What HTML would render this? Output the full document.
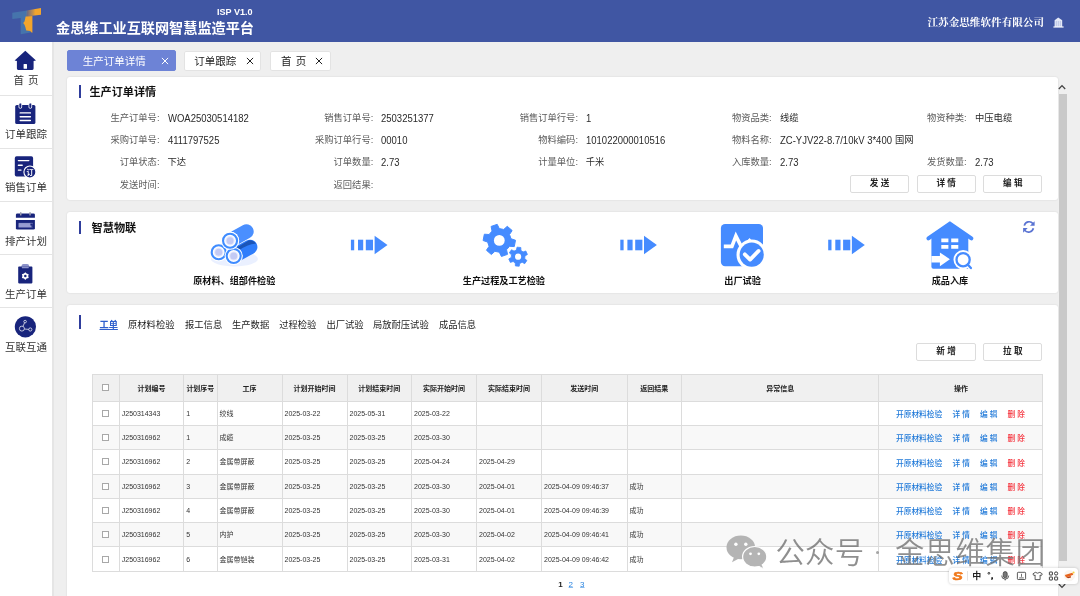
<!DOCTYPE html>
<html lang="zh-CN">
<head>
<meta charset="utf-8">
<title>金思维工业互联网智慧监造平台</title>
<style>
*{box-sizing:border-box;margin:0;padding:0}
html,body{width:1080px;height:596px;overflow:hidden;background:#efefef}
body{position:relative;font-family:"Liberation Sans","Noto Sans CJK SC",sans-serif;color:#222;font-size:9.3px}
.a{position:absolute}
.t{position:absolute;white-space:nowrap;line-height:1}
#hdr{left:0;top:0;width:1080px;height:41.8px;background:#4056a3}
#side{left:0;top:42px;width:54px;height:554px;background:#fff;border-right:2px solid #e5e5e5}
.sdiv{position:absolute;left:0;width:52px;height:1px;background:#e4e4e4}
.slab{position:absolute;left:0;width:52px;text-align:center;font-size:10.5px;line-height:12px;color:#333;white-space:nowrap}
.card{position:absolute;background:#fff;border-radius:3px;box-shadow:0 0 2px rgba(0,0,0,.12)}
.bar{position:absolute;width:2.2px;background:#2f3d9c}
.lab{position:absolute;white-space:nowrap;line-height:12px;font-size:9.3px;color:#5c5c5c;text-align:right}
.val{position:absolute;white-space:nowrap;line-height:12px;font-size:10.5px;color:#2a2a2a;transform:scaleX(.905);transform-origin:0 50%}
.val.cj{font-size:9.3px;transform:none}
.btn{position:absolute;height:17.5px;border:1px solid #dcdcdc;border-radius:2px;background:#fff;font-size:8.6px;font-weight:bold;line-height:15.5px;text-align:center;color:#222;white-space:nowrap}
.tab{position:absolute;top:50px;height:21px;border-radius:2px;background:#fff;border:1px solid #e3e3e3;font-size:10.5px;line-height:19px;color:#222;white-space:nowrap}
</style>
</head>
<body>
<div id="root" style="position:absolute;left:0;top:0;width:1080px;height:596px;will-change:transform">
<!-- HEADER -->
<div id="hdr" class="a">
  <svg class="a" style="left:0;top:0" width="52" height="42" viewBox="0 0 52 42">
    <defs><linearGradient id="lg1" x1="0" x2="1" y1="0" y2="0"><stop offset="0" stop-color="#f3a52c" stop-opacity="0.15"/><stop offset="0.5" stop-color="#f3a52c" stop-opacity="0.8"/><stop offset="0.62" stop-color="#f3a52c" stop-opacity="1"/></linearGradient></defs>
    <path d="M12.3 12.8 L27.2 10.4 L26.4 17.2 L26 30 L30.4 31 L30.6 32.6 L20.7 34.2 L20.7 17.9 L12.3 18.9 Z" fill="#4674ac"/>
    <path d="M26.6 10.5 L41 8 L41 14.8 L26 16.4 Z" fill="url(#lg1)"/>
    <path d="M25.6 16.5 L32.4 15.9 L32.4 32.7 L31.2 32.2 L30.2 30.9 L26.2 30.5 L25.4 27.2 L24.5 24.8 L23.2 23 L24.5 21.4 L25.1 19 Z" fill="#f3a52c"/>
  </svg>
  <div class="t" style="left:217px;top:7.8px;font-size:9.05px;font-weight:bold;color:#fff">ISP V1.0</div>
  <div class="t" style="left:56px;top:21.2px;font-size:14.15px;font-weight:bold;color:#fff">金思维工业互联网智慧监造平台</div>
  <div class="t" style="left:927.5px;top:17.6px;font-size:10.6px;font-weight:bold;color:#fff;font-family:'Liberation Serif','Noto Serif CJK SC',serif">江苏金思维软件有限公司</div>
  <svg class="a" style="left:1053px;top:16.5px" width="11" height="11" viewBox="0 0 11 11">
    <path d="M1.6 10 V3.2 L5.2 0.6 L9.2 3.2 V10 Z" fill="#e4e9f7"/>
    <path d="M3.3 4 V9.4 M5.3 4 V9.4 M7.3 4 V9.4" stroke="#a9b6dd" stroke-width="0.7"/>
    <rect x="0.4" y="9.4" width="10.2" height="1.2" fill="#f4f6fc"/>
  </svg>
</div>

<!-- SIDEBAR -->
<div id="side" class="a"></div>
<div id="sideitems" class="a" style="left:0;top:0;width:52px;height:596px">
  <div class="sdiv" style="top:95px"></div>
  <div class="sdiv" style="top:148px"></div>
  <div class="sdiv" style="top:201px"></div>
  <div class="sdiv" style="top:254px"></div>
  <div class="sdiv" style="top:307px"></div>
  <div class="slab" style="top:74px;word-spacing:1px">首 页</div>
  <div class="slab" style="top:128px">订单跟踪</div>
  <div class="slab" style="top:181px">销售订单</div>
  <div class="slab" style="top:235px">排产计划</div>
  <div class="slab" style="top:288px">生产订单</div>
  <div class="slab" style="top:341px">互联互通</div>
  <svg class="a" style="left:0;top:0" width="52" height="596" viewBox="0 0 52 596">
<!-- home -->
<path d="M25.3 50.8 L36 60.6 L33.6 60.9 L33.6 68.6 Q33.6 69.9 32.3 69.9 L18.2 69.9 Q16.9 69.9 16.9 68.6 L16.9 60.9 L14.6 60.6 Z" fill="#18247c"/>
<rect x="23.6" y="64" width="3.4" height="4.8" rx="0.5" fill="#fff"/>
<!-- order tracking -->
<rect x="15.2" y="105" width="20.2" height="19" rx="1.6" fill="#18247c"/>
<rect x="18.9" y="103" width="2.8" height="5.4" rx="1.4" fill="#18247c" stroke="#fff" stroke-width="0.8"/>
<rect x="28.9" y="103" width="2.8" height="5.4" rx="1.4" fill="#18247c" stroke="#fff" stroke-width="0.8"/>
<path d="M20.2 112.9 H30.4 M20.2 116.7 H30.4 M20.2 120.5 H30.4" stroke="#fff" stroke-width="1.4" stroke-linecap="round"/>
<!-- sales order -->
<rect x="14.8" y="156.3" width="18.3" height="20.2" rx="1.8" fill="#18247c"/>
<path d="M18.4 160.6 H28.8 M18.4 165.3 H22.2 M18.4 170.1 H21" stroke="#fff" stroke-width="1.4" stroke-linecap="round"/>
<circle cx="29.9" cy="172" r="6" fill="#18247c" stroke="#fff" stroke-width="1.1"/>
<text x="29.9" y="174.6" font-size="7" font-weight="bold" fill="#fff" text-anchor="middle" font-family="'Liberation Sans','Noto Sans CJK SC',sans-serif">订</text>
<!-- schedule -->
<path d="M15.9 214.8 Q15.9 213.4 17.3 213.4 H33.5 Q34.9 213.4 34.9 214.8 V217.8 H15.9 Z" fill="#18247c"/>
<path d="M15.9 219.9 H34.9 V228.2 Q34.9 229.6 33.5 229.6 H17.3 Q15.9 229.6 15.9 228.2 Z" fill="#18247c"/>
<rect x="20" y="212" width="1.5" height="3.6" rx="0.7" fill="#9a9cb0"/>
<rect x="29.3" y="212" width="1.5" height="3.6" rx="0.7" fill="#9a9cb0"/>
<rect x="18.6" y="222.9" width="14.2" height="4.6" fill="#8b91c9"/>
<path d="M18.6 224.2 H31 M18.6 225.4 H31 M18.6 226.6 H31" stroke="#a9aede" stroke-width="0.5"/>
<path d="M30.4 223.6 h2.4 v3.9 h-1.2 v-2 h-1.2 z" fill="#18247c"/>
<!-- production order -->
<rect x="21.5" y="264.1" width="7.6" height="4.4" rx="2" fill="#8b91c9"/>
<rect x="18.2" y="266.6" width="14.2" height="16.8" rx="0.8" fill="#18247c"/>
<path d="M21.8 266.6 H28.8 V267.4 Q28.8 268.3 27.9 268.3 H22.7 Q21.8 268.3 21.8 267.4 Z" fill="#8b91c9"/>
<g transform="translate(25.3 276.1)">
<path d="M0 -3.9 L1.3 -2.5 L3.4 -1.95 L2.9 0 L3.4 1.95 L1.3 2.5 L0 3.9 L-1.3 2.5 L-3.4 1.95 L-2.9 0 L-3.4 -1.95 L-1.3 -2.5 Z" fill="#fff"/>
<circle r="1.25" fill="#18247c"/>
</g>
<!-- interconnect -->
<circle cx="25.4" cy="326.8" r="10.6" fill="#18247c"/>
<g fill="none" stroke="#fff" stroke-width="0.7">
<circle cx="21.9" cy="328.6" r="2.5"/>
<circle cx="25.1" cy="321.6" r="1.3"/>
<circle cx="30.3" cy="329.5" r="1.6"/>
<path d="M23 326.3 L24.5 322.9 M24.4 329 L28.7 329.4"/>
</g>
</svg>
</div>

<!-- PAGE TABS -->
<div class="tab" style="left:66.5px;width:109px;background:#6d83d6;border-color:#6d83d6;color:#fff"><span class="t" style="left:15.3px;top:4.7px">生产订单详情</span><svg class="a" style="left:93.2px;top:5.8px" width="8" height="8" viewBox="0 0 8 8"><path d="M0.9 0.9 L7.1 7.1 M7.1 0.9 L0.9 7.1" stroke="#fff" stroke-width="1" fill="none"/></svg></div>
<div class="tab" style="left:183.7px;width:77.3px;top:51px;height:20px"><span class="t" style="left:9.6px;top:3.7px">订单跟踪</span><svg class="a" style="left:61.3px;top:4.8px" width="8" height="8" viewBox="0 0 8 8"><path d="M0.9 0.9 L7.1 7.1 M7.1 0.9 L0.9 7.1" stroke="#222" stroke-width="1" fill="none"/></svg></div>
<div class="tab" style="left:269.5px;width:61px;top:51px;height:20px"><span class="t" style="left:10.4px;top:3.7px;word-spacing:1.4px">首 页</span><svg class="a" style="left:44.8px;top:4.8px" width="8" height="8" viewBox="0 0 8 8"><path d="M0.9 0.9 L7.1 7.1 M7.1 0.9 L0.9 7.1" stroke="#222" stroke-width="1" fill="none"/></svg></div>

<!-- CARD 1 -->
<div class="card" style="left:66.7px;top:76.7px;width:991px;height:123.3px"></div>
<div class="bar" style="left:79.2px;top:85px;height:13px"></div>
<div class="t" style="left:89.5px;top:87.2px;font-size:11.1px;font-weight:bold;color:#111">生产订单详情</div>
<div class="lab" style="left:59.5px;width:100px;top:112px">生产订单号:</div>
<div class="val" style="left:167.5px;top:112px">WOA25030514182</div>
<div class="lab" style="left:273.3px;width:100px;top:112px">销售订单号:</div>
<div class="val" style="left:381.3px;top:112px">2503251377</div>
<div class="lab" style="left:478.0px;width:100px;top:112px">销售订单行号:</div>
<div class="val" style="left:585.8px;top:112px">1</div>
<div class="lab" style="left:671.7px;width:100px;top:112px">物资品类:</div>
<div class="val cj" style="left:780.0px;top:112px">线缆</div>
<div class="lab" style="left:866.7px;width:100px;top:112px">物资种类:</div>
<div class="val cj" style="left:975.0px;top:112px">中压电缆</div>
<div class="lab" style="left:59.5px;width:100px;top:134.4px">采购订单号:</div>
<div class="val" style="left:167.5px;top:134.4px">4111797525</div>
<div class="lab" style="left:273.3px;width:100px;top:134.4px">采购订单行号:</div>
<div class="val" style="left:381.3px;top:134.4px">00010</div>
<div class="lab" style="left:478.0px;width:100px;top:134.4px">物料编码:</div>
<div class="val" style="left:585.8px;top:134.4px">101022000010516</div>
<div class="lab" style="left:671.7px;width:100px;top:134.4px">物料名称:</div>
<div class="val" style="left:780.0px;top:134.4px">ZC-YJV22-8.7/10kV 3*400</div><div class="val cj" style="left:895px;top:134.4px">国网</div>
<div class="lab" style="left:59.5px;width:100px;top:156px">订单状态:</div>
<div class="val cj" style="left:167.5px;top:156px">下达</div>
<div class="lab" style="left:273.3px;width:100px;top:156px">订单数量:</div>
<div class="val" style="left:381.3px;top:156px">2.73</div>
<div class="lab" style="left:478.0px;width:100px;top:156px">计量单位:</div>
<div class="val cj" style="left:585.8px;top:156px">千米</div>
<div class="lab" style="left:671.7px;width:100px;top:156px">入库数量:</div>
<div class="val" style="left:780.0px;top:156px">2.73</div>
<div class="lab" style="left:866.7px;width:100px;top:156px">发货数量:</div>
<div class="val" style="left:975.0px;top:156px">2.73</div>
<div class="lab" style="left:59.5px;width:100px;top:179px">发送时间:</div>
<div class="lab" style="left:273.3px;width:100px;top:179px">返回结果:</div>
<div class="btn" style="left:850px;top:175px;width:59px">发 送</div>
<div class="btn" style="left:916.7px;top:175px;width:59px">详 情</div>
<div class="btn" style="left:983.3px;top:175px;width:59px">编 辑</div>

<!-- CARD 2 -->
<div class="card" style="left:66.7px;top:211.6px;width:991px;height:81.4px"></div>
<div class="bar" style="left:79.2px;top:220.6px;height:13px"></div>
<div class="t" style="left:91.5px;top:223.4px;font-size:11.2px;font-weight:bold;color:#111">智慧物联</div>
<svg class="a" style="left:0;top:0" width="1080" height="596" viewBox="0 0 1080 596"><g transform="translate(-0.2 0.6)"><ellipse cx="234.6" cy="258.3" rx="23.5" ry="7.5" fill="#eaf0ff"/><line x1="230.25" y1="240.1" x2="246.6" y2="230.9" stroke="#4a8fff" stroke-width="14.6" stroke-linecap="round"/><circle cx="230.25" cy="240.1" r="9.1" fill="#fff"/><circle cx="230.25" cy="240.1" r="7" fill="#fdfdff" stroke="#3f8cff" stroke-width="2.1"/><circle cx="230.25" cy="240.1" r="4.6" fill="#e6e9fb"/><circle cx="230.25" cy="240.1" r="3.5" fill="#c3caf4"/><line x1="233.9" y1="255.4" x2="250.3" y2="246.4" stroke="#2f7dfb" stroke-width="14.6" stroke-linecap="round"/><path d="M237 247 L249.3 239.6 Q254 239.2 256.2 243.2 Q250 242.4 239 249.8 Z" fill="#1b55b8"/><circle cx="218.9" cy="251.7" r="9.1" fill="#fff"/><circle cx="218.9" cy="251.7" r="7" fill="#fdfdff" stroke="#3f8cff" stroke-width="2.1"/><circle cx="218.9" cy="251.7" r="4.6" fill="#e6e9fb"/><circle cx="218.9" cy="251.7" r="3.5" fill="#c3caf4"/><circle cx="233.9" cy="255.4" r="9.1" fill="#fff"/><circle cx="233.9" cy="255.4" r="7" fill="#fdfdff" stroke="#3f8cff" stroke-width="2.1"/><circle cx="233.9" cy="255.4" r="4.6" fill="#e6e9fb"/><circle cx="233.9" cy="255.4" r="3.5" fill="#c3caf4"/><circle cx="230.25" cy="240.1" r="9.1" fill="#fff"/><circle cx="230.25" cy="240.1" r="7" fill="#fdfdff" stroke="#3f8cff" stroke-width="2.1"/><circle cx="230.25" cy="240.1" r="4.6" fill="#e6e9fb"/><circle cx="230.25" cy="240.1" r="3.5" fill="#c3caf4"/></g><rect x="350.9" y="239.7" width="3.3" height="10.6" fill="#458bff"/><rect x="358.0" y="239.7" width="5.2" height="10.6" fill="#458bff"/><rect x="365.79999999999995" y="239.7" width="7.2" height="10.6" fill="#458bff"/><path d="M374.59999999999997 235.7 L387.5 245 L374.59999999999997 254.3 Z" fill="#458bff"/><rect x="620.3" y="239.7" width="3.3" height="10.6" fill="#458bff"/><rect x="627.4" y="239.7" width="5.2" height="10.6" fill="#458bff"/><rect x="635.1999999999999" y="239.7" width="7.2" height="10.6" fill="#458bff"/><path d="M644.0 235.7 L656.9 245 L644.0 254.3 Z" fill="#458bff"/><rect x="828.2" y="239.7" width="3.3" height="10.6" fill="#458bff"/><rect x="835.3" y="239.7" width="5.2" height="10.6" fill="#458bff"/><rect x="843.1" y="239.7" width="7.2" height="10.6" fill="#458bff"/><path d="M851.9 235.7 L864.8 245 L851.9 254.3 Z" fill="#458bff"/><path d="M492.04 231.10 L491.08 226.44 L497.19 224.34 L499.30 228.60 L503.72 229.46 L507.28 226.30 L512.15 230.54 L509.52 234.50 L510.99 238.76 L515.50 240.26 L514.27 246.60 L509.52 246.30 L506.56 249.70 L507.52 254.36 L501.41 256.46 L499.30 252.20 L494.88 251.34 L491.32 254.50 L486.45 250.26 L489.08 246.30 L487.61 242.04 L483.10 240.54 L484.33 234.20 L489.08 234.50 Z" fill="#458bff" stroke="#458bff" stroke-width="1" stroke-linejoin="round"/><circle cx="499.3" cy="240.4" r="5.4" fill="#fff"/><path d="M516.43 250.00 L517.01 247.16 L520.83 247.50 L520.91 250.40 L523.06 251.91 L525.82 250.99 L527.43 254.46 L524.96 255.98 L524.73 258.60 L526.90 260.53 L524.71 263.66 L522.16 262.28 L519.77 263.40 L519.19 266.24 L515.37 265.90 L515.29 263.00 L513.14 261.49 L510.38 262.41 L508.77 258.94 L511.24 257.42 L511.47 254.80 L509.30 252.87 L511.49 249.74 L514.04 251.12 Z" fill="#458bff" stroke="#458bff" stroke-width="0.8" stroke-linejoin="round"/><circle cx="518.1" cy="256.7" r="3.1" fill="#fff"/><rect x="720.9" y="223.9" width="42.1" height="42.3" rx="4.2" fill="#458bff"/><path d="M723.8 246.4 H731.9 L735.9 236 L742 248 L749.5 240.8 L752 244" fill="none" stroke="#fff" stroke-width="3.6" stroke-linejoin="miter" stroke-miterlimit="6"/><circle cx="751.7" cy="254.7" r="15.2" fill="#fff"/><circle cx="751.7" cy="254.7" r="12.1" fill="#458bff"/><path d="M744.8 254.3 L750.1 259.6 L758.6 250.9" fill="none" stroke="#fff" stroke-width="3.8" stroke-linecap="round" stroke-linejoin="round"/><path d="M949.9 223.6 L928.4 238.3 M949.9 223.6 L971.4 238.3" stroke="#458bff" stroke-width="4" stroke-linecap="round"/><path d="M949.9 222 L968.3 235 V268.7 H933.4 Q931.4 268.7 931.4 266.7 V235 Z" fill="#458bff"/><path d="M941.3 238.5h7.1v3.7h-7.1zM951.2 238.5h7.1v3.7h-7.1zM941.3 245h7.1v3.7h-7.1zM951.2 245h7.1v3.7h-7.1z" fill="#fff"/><path d="M931.4 256 H939.9 V252.4 L949.9 259.3 L939.9 266.2 V262.5 H931.4 Z" fill="#fff"/><circle cx="963.1" cy="259.7" r="9.6" fill="#fff"/><path d="M967.5 264.3 L971.6 268.9" stroke="#fff" stroke-width="4.6" stroke-linecap="round"/><circle cx="963.1" cy="259.7" r="6.6" fill="#fff" stroke="#458bff" stroke-width="2.3"/><path d="M967.9 264.7 L970.9 268.1" stroke="#458bff" stroke-width="2.3" stroke-linecap="round"/><g fill="none" stroke="#5a73d2" stroke-width="1.7"><path d="M1024.3 225.6 A5 5 0 0 1 1033 223.6"/><path d="M1033.4 228.3 A5 5 0 0 1 1024.7 230.3"/></g><path d="M1034.6 221.2 V225.8 H1030 Z" fill="#5a73d2"/><path d="M1023.1 232.7 V228.1 H1027.7 Z" fill="#5a73d2"/></svg>
<div class="t" style="left:174.2px;width:120px;text-align:center;top:277px;font-size:9.15px;font-weight:bold;color:#111">原材料、组部件检验</div>
<div class="t" style="left:443.9px;width:120px;text-align:center;top:277px;font-size:9.15px;font-weight:bold;color:#111">生产过程及工艺检验</div>
<div class="t" style="left:682.5px;width:120px;text-align:center;top:277px;font-size:9.15px;font-weight:bold;color:#111">出厂试验</div>
<div class="t" style="left:889.9px;width:120px;text-align:center;top:277px;font-size:9.15px;font-weight:bold;color:#111">成品入库</div>

<!-- CARD 3 -->
<div class="card" style="left:66.7px;top:304.5px;width:991px;height:300px"></div>
<div class="bar" style="left:79.2px;top:315.2px;height:13.6px"></div>
<div class="t" style="left:99.5px;top:320.6px;font-size:9.2px;font-weight:bold;color:#2f5fcc;text-decoration:underline;text-underline-offset:0.8px">工单</div>
<div class="t" style="left:128px;top:320.6px;font-size:9.3px;color:#222">原材料检验</div>
<div class="t" style="left:185px;top:320.6px;font-size:9.3px;color:#222">报工信息</div>
<div class="t" style="left:232px;top:320.6px;font-size:9.3px;color:#222">生产数据</div>
<div class="t" style="left:279.2px;top:320.6px;font-size:9.3px;color:#222">过程检验</div>
<div class="t" style="left:326.4px;top:320.6px;font-size:9.3px;color:#222">出厂试验</div>
<div class="t" style="left:372.9px;top:320.6px;font-size:9.3px;color:#222">局放耐压试验</div>
<div class="t" style="left:438.9px;top:320.6px;font-size:9.3px;color:#222">成品信息</div>
<div class="btn" style="left:916.3px;top:343.2px;width:59.5px">新 增</div>
<div class="btn" style="left:983.2px;top:343.2px;width:59.2px">拉 取</div>
<div id="tbl" class="a" style="left:92.5px;top:374.5px;width:949.8px;height:196.7px;background:#fff;font-size:7px;color:#333">
<div class="a" style="left:0;top:0;width:949.8px;height:26.5px;background:#f0f0f0"></div>
<div class="a" style="left:0;top:50.8px;width:949.8px;height:24.4px;background:#f8f8f8"></div>
<div class="a" style="left:0;top:99.5px;width:949.8px;height:24.3px;background:#f8f8f8"></div>
<div class="a" style="left:0;top:148.1px;width:949.8px;height:24.3px;background:#f8f8f8"></div>
<div class="a" style="left:0;top:-0.5px;width:949.8px;height:1px;background:#dcdcdc"></div>
<div class="a" style="left:0;top:26.0px;width:949.8px;height:1px;background:#dcdcdc"></div>
<div class="a" style="left:0;top:50.3px;width:949.8px;height:1px;background:#dcdcdc"></div>
<div class="a" style="left:0;top:74.7px;width:949.8px;height:1px;background:#dcdcdc"></div>
<div class="a" style="left:0;top:99.0px;width:949.8px;height:1px;background:#dcdcdc"></div>
<div class="a" style="left:0;top:123.3px;width:949.8px;height:1px;background:#dcdcdc"></div>
<div class="a" style="left:0;top:147.6px;width:949.8px;height:1px;background:#dcdcdc"></div>
<div class="a" style="left:0;top:171.9px;width:949.8px;height:1px;background:#dcdcdc"></div>
<div class="a" style="left:0;top:196.2px;width:949.8px;height:1px;background:#dcdcdc"></div>
<div class="a" style="left:-0.50px;top:-0.5px;width:1px;height:197.7px;background:#dcdcdc"></div>
<div class="a" style="left:26.25px;top:-0.5px;width:1px;height:197.7px;background:#dcdcdc"></div>
<div class="a" style="left:90.75px;top:-0.5px;width:1px;height:197.7px;background:#dcdcdc"></div>
<div class="a" style="left:124.00px;top:-0.5px;width:1px;height:197.7px;background:#dcdcdc"></div>
<div class="a" style="left:189.00px;top:-0.5px;width:1px;height:197.7px;background:#dcdcdc"></div>
<div class="a" style="left:254.00px;top:-0.5px;width:1px;height:197.7px;background:#dcdcdc"></div>
<div class="a" style="left:318.50px;top:-0.5px;width:1px;height:197.7px;background:#dcdcdc"></div>
<div class="a" style="left:383.50px;top:-0.5px;width:1px;height:197.7px;background:#dcdcdc"></div>
<div class="a" style="left:448.50px;top:-0.5px;width:1px;height:197.7px;background:#dcdcdc"></div>
<div class="a" style="left:534.00px;top:-0.5px;width:1px;height:197.7px;background:#dcdcdc"></div>
<div class="a" style="left:588.50px;top:-0.5px;width:1px;height:197.7px;background:#dcdcdc"></div>
<div class="a" style="left:785.7px;top:-0.5px;width:1px;height:197.7px;background:#dcdcdc"></div>
<div class="a" style="left:949.3px;top:-0.5px;width:1px;height:197.7px;background:#dcdcdc"></div>
<div class="a" style="left:9.88px;top:9.8px;width:7px;height:7px;border:1px solid #a8a8a8;background:#fff"></div>
<div class="t" style="left:26.75px;width:64.50px;text-align:center;top:10.5px;font-weight:bold;color:#222">计划编号</div>
<div class="t" style="left:91.25px;width:33.25px;text-align:center;top:10.5px;font-weight:bold;color:#222">计划序号</div>
<div class="t" style="left:124.50px;width:65.00px;text-align:center;top:10.5px;font-weight:bold;color:#222">工序</div>
<div class="t" style="left:189.50px;width:65.00px;text-align:center;top:10.5px;font-weight:bold;color:#222">计划开始时间</div>
<div class="t" style="left:254.50px;width:64.50px;text-align:center;top:10.5px;font-weight:bold;color:#222">计划结束时间</div>
<div class="t" style="left:319.00px;width:65.00px;text-align:center;top:10.5px;font-weight:bold;color:#222">实际开始时间</div>
<div class="t" style="left:384.00px;width:65.00px;text-align:center;top:10.5px;font-weight:bold;color:#222">实际结束时间</div>
<div class="t" style="left:449.00px;width:85.50px;text-align:center;top:10.5px;font-weight:bold;color:#222">发送时间</div>
<div class="t" style="left:534.50px;width:54.50px;text-align:center;top:10.5px;font-weight:bold;color:#222">返回结果</div>
<div class="t" style="left:589.00px;width:197.50px;text-align:center;top:10.5px;font-weight:bold;color:#222">异常信息</div>
<div class="t" style="left:786.50px;width:164.00px;text-align:center;top:10.5px;font-weight:bold;color:#222">操作</div>
<div class="a" style="left:9.88px;top:35.1px;width:7px;height:7px;border:1px solid #a8a8a8;background:#fff"></div>
<div class="t" style="left:29.25px;top:35.1px">J250314343</div>
<div class="t" style="left:93.75px;top:35.1px">1</div>
<div class="t" style="left:127.00px;top:35.1px">绞线</div>
<div class="t" style="left:192.00px;top:35.1px">2025-03-22</div>
<div class="t" style="left:257.00px;top:35.1px">2025-05-31</div>
<div class="t" style="left:321.50px;top:35.1px">2025-03-22</div>
<div class="t" style="left:803.5px;top:36.2px;font-size:7.7px;font-weight:500;color:#1e78d8">开原材料检验</div>
<div class="t" style="left:860.0px;top:36.2px;font-size:7.7px;font-weight:500;color:#1e78d8">详 情</div>
<div class="t" style="left:887.5px;top:36.2px;font-size:7.7px;font-weight:500;color:#1e78d8">编 辑</div>
<div class="t" style="left:915.0px;top:36.2px;font-size:7.7px;font-weight:500;color:#f5323c">删 除</div>
<div class="a" style="left:9.88px;top:59.5px;width:7px;height:7px;border:1px solid #a8a8a8;background:#fff"></div>
<div class="t" style="left:29.25px;top:59.5px">J250316962</div>
<div class="t" style="left:93.75px;top:59.5px">1</div>
<div class="t" style="left:127.00px;top:59.5px">成缆</div>
<div class="t" style="left:192.00px;top:59.5px">2025-03-25</div>
<div class="t" style="left:257.00px;top:59.5px">2025-03-25</div>
<div class="t" style="left:321.50px;top:59.5px">2025-03-30</div>
<div class="t" style="left:803.5px;top:60.6px;font-size:7.7px;font-weight:500;color:#1e78d8">开原材料检验</div>
<div class="t" style="left:860.0px;top:60.6px;font-size:7.7px;font-weight:500;color:#1e78d8">详 情</div>
<div class="t" style="left:887.5px;top:60.6px;font-size:7.7px;font-weight:500;color:#1e78d8">编 辑</div>
<div class="t" style="left:915.0px;top:60.6px;font-size:7.7px;font-weight:500;color:#f5323c">删 除</div>
<div class="a" style="left:9.88px;top:83.9px;width:7px;height:7px;border:1px solid #a8a8a8;background:#fff"></div>
<div class="t" style="left:29.25px;top:83.9px">J250316962</div>
<div class="t" style="left:93.75px;top:83.9px">2</div>
<div class="t" style="left:127.00px;top:83.9px">金属带屏蔽</div>
<div class="t" style="left:192.00px;top:83.9px">2025-03-25</div>
<div class="t" style="left:257.00px;top:83.9px">2025-03-25</div>
<div class="t" style="left:321.50px;top:83.9px">2025-04-24</div>
<div class="t" style="left:386.50px;top:83.9px">2025-04-29</div>
<div class="t" style="left:803.5px;top:85.0px;font-size:7.7px;font-weight:500;color:#1e78d8">开原材料检验</div>
<div class="t" style="left:860.0px;top:85.0px;font-size:7.7px;font-weight:500;color:#1e78d8">详 情</div>
<div class="t" style="left:887.5px;top:85.0px;font-size:7.7px;font-weight:500;color:#1e78d8">编 辑</div>
<div class="t" style="left:915.0px;top:85.0px;font-size:7.7px;font-weight:500;color:#f5323c">删 除</div>
<div class="a" style="left:9.88px;top:108.1px;width:7px;height:7px;border:1px solid #a8a8a8;background:#fff"></div>
<div class="t" style="left:29.25px;top:108.1px">J250316962</div>
<div class="t" style="left:93.75px;top:108.1px">3</div>
<div class="t" style="left:127.00px;top:108.1px">金属带屏蔽</div>
<div class="t" style="left:192.00px;top:108.1px">2025-03-25</div>
<div class="t" style="left:257.00px;top:108.1px">2025-03-25</div>
<div class="t" style="left:321.50px;top:108.1px">2025-03-30</div>
<div class="t" style="left:386.50px;top:108.1px">2025-04-01</div>
<div class="t" style="left:451.50px;top:108.1px">2025-04-09 09:46:37</div>
<div class="t" style="left:537.00px;top:108.1px">成功</div>
<div class="t" style="left:803.5px;top:109.2px;font-size:7.7px;font-weight:500;color:#1e78d8">开原材料检验</div>
<div class="t" style="left:860.0px;top:109.2px;font-size:7.7px;font-weight:500;color:#1e78d8">详 情</div>
<div class="t" style="left:887.5px;top:109.2px;font-size:7.7px;font-weight:500;color:#1e78d8">编 辑</div>
<div class="t" style="left:915.0px;top:109.2px;font-size:7.7px;font-weight:500;color:#f5323c">删 除</div>
<div class="a" style="left:9.88px;top:132.5px;width:7px;height:7px;border:1px solid #a8a8a8;background:#fff"></div>
<div class="t" style="left:29.25px;top:132.5px">J250316962</div>
<div class="t" style="left:93.75px;top:132.5px">4</div>
<div class="t" style="left:127.00px;top:132.5px">金属带屏蔽</div>
<div class="t" style="left:192.00px;top:132.5px">2025-03-25</div>
<div class="t" style="left:257.00px;top:132.5px">2025-03-25</div>
<div class="t" style="left:321.50px;top:132.5px">2025-03-30</div>
<div class="t" style="left:386.50px;top:132.5px">2025-04-01</div>
<div class="t" style="left:451.50px;top:132.5px">2025-04-09 09:46:39</div>
<div class="t" style="left:537.00px;top:132.5px">成功</div>
<div class="t" style="left:803.5px;top:133.6px;font-size:7.7px;font-weight:500;color:#1e78d8">开原材料检验</div>
<div class="t" style="left:860.0px;top:133.6px;font-size:7.7px;font-weight:500;color:#1e78d8">详 情</div>
<div class="t" style="left:887.5px;top:133.6px;font-size:7.7px;font-weight:500;color:#1e78d8">编 辑</div>
<div class="t" style="left:915.0px;top:133.6px;font-size:7.7px;font-weight:500;color:#f5323c">删 除</div>
<div class="a" style="left:9.88px;top:156.8px;width:7px;height:7px;border:1px solid #a8a8a8;background:#fff"></div>
<div class="t" style="left:29.25px;top:156.8px">J250316962</div>
<div class="t" style="left:93.75px;top:156.8px">5</div>
<div class="t" style="left:127.00px;top:156.8px">内护</div>
<div class="t" style="left:192.00px;top:156.8px">2025-03-25</div>
<div class="t" style="left:257.00px;top:156.8px">2025-03-25</div>
<div class="t" style="left:321.50px;top:156.8px">2025-03-30</div>
<div class="t" style="left:386.50px;top:156.8px">2025-04-02</div>
<div class="t" style="left:451.50px;top:156.8px">2025-04-09 09:46:41</div>
<div class="t" style="left:537.00px;top:156.8px">成功</div>
<div class="t" style="left:803.5px;top:157.9px;font-size:7.7px;font-weight:500;color:#1e78d8">开原材料检验</div>
<div class="t" style="left:860.0px;top:157.9px;font-size:7.7px;font-weight:500;color:#1e78d8">详 情</div>
<div class="t" style="left:887.5px;top:157.9px;font-size:7.7px;font-weight:500;color:#1e78d8">编 辑</div>
<div class="t" style="left:915.0px;top:157.9px;font-size:7.7px;font-weight:500;color:#f5323c">删 除</div>
<div class="a" style="left:9.88px;top:181.0px;width:7px;height:7px;border:1px solid #a8a8a8;background:#fff"></div>
<div class="t" style="left:29.25px;top:181.0px">J250316962</div>
<div class="t" style="left:93.75px;top:181.0px">6</div>
<div class="t" style="left:127.00px;top:181.0px">金属带铠装</div>
<div class="t" style="left:192.00px;top:181.0px">2025-03-25</div>
<div class="t" style="left:257.00px;top:181.0px">2025-03-25</div>
<div class="t" style="left:321.50px;top:181.0px">2025-03-31</div>
<div class="t" style="left:386.50px;top:181.0px">2025-04-02</div>
<div class="t" style="left:451.50px;top:181.0px">2025-04-09 09:46:42</div>
<div class="t" style="left:537.00px;top:181.0px">成功</div>
<div class="t" style="left:803.5px;top:182.1px;font-size:7.7px;font-weight:500;color:#1e78d8">开原材料检验</div>
<div class="t" style="left:860.0px;top:182.1px;font-size:7.7px;font-weight:500;color:#1e78d8">详 情</div>
<div class="t" style="left:887.5px;top:182.1px;font-size:7.7px;font-weight:500;color:#1e78d8">编 辑</div>
<div class="t" style="left:915.0px;top:182.1px;font-size:7.7px;font-weight:500;color:#f5323c">删 除</div>
</div>
<div class="t" style="left:558.2px;top:581.2px;font-size:8px;font-weight:bold;color:#222">1</div>
<div class="t" style="left:568.6px;top:581.2px;font-size:8px;color:#2a84e0;text-decoration:underline;text-decoration-color:rgba(42,132,224,.55);text-decoration-thickness:0.7px;text-underline-offset:0.3px">2</div>
<div class="t" style="left:580.1px;top:581.2px;font-size:8px;color:#2a84e0;text-decoration:underline;text-decoration-color:rgba(42,132,224,.55);text-decoration-thickness:0.7px;text-underline-offset:0.3px">3</div>

<!-- SCROLLBAR -->
<div class="a" style="left:1058.9px;top:94.3px;width:7.8px;height:466.5px;background:#c9c9c9"></div>
<svg class="a" style="left:1058px;top:84px" width="8" height="6" viewBox="0 0 8 6"><path d="M0.8 5 L4 1.6 L7.2 5" fill="none" stroke="#444" stroke-width="1.3"/></svg>
<svg class="a" style="left:1058px;top:583px" width="8" height="6" viewBox="0 0 8 6"><path d="M0.8 1 L4 4.4 L7.2 1" fill="none" stroke="#444" stroke-width="1.3"/></svg>

<svg class="a" style="left:720px;top:530px;opacity:.95" width="60" height="45" viewBox="720 530 60 45">
<path d="M732 562.2 L734.2 556.6 L739 558.6 Z" fill="#b1b1b1"/>
<ellipse cx="740.8" cy="547.4" rx="14.3" ry="11.8" fill="#b1b1b1"/>
<circle cx="735.9" cy="544.2" r="1.7" fill="#fff"/><circle cx="745.8" cy="544.2" r="1.7" fill="#fff"/>
<path d="M763.2 568.4 L761.4 563.2 L757 565.2 Z" fill="#b1b1b1" stroke="#fff" stroke-width="0.6"/>
<ellipse cx="754.7" cy="556.8" rx="12.1" ry="10.3" fill="#b1b1b1" stroke="#fff" stroke-width="1.2"/>
<path d="M762.6 567.6 L761 563 L757.4 564.8 Z" fill="#b1b1b1"/>
<circle cx="750.5" cy="553.8" r="1.4" fill="#fff"/><circle cx="758.8" cy="553.8" r="1.4" fill="#fff"/>
</svg>
<div class="t" style="left:775.5px;top:538px;font-size:29.4px;font-weight:350;color:rgba(105,105,105,.75);letter-spacing:0.2px">公众号</div>
<div class="a" style="left:875.6px;top:550.7px;width:3.6px;height:3.6px;border-radius:50%;background:rgba(128,128,128,.7)"></div>
<div class="t" style="left:895px;top:538px;font-size:29.4px;font-weight:350;color:rgba(105,105,105,.75);letter-spacing:0.8px">金思维集团</div>
<div class="a" style="left:948.5px;top:568px;width:129.5px;height:15.5px;background:#fff;border-radius:3.5px;box-shadow:0 0 3px rgba(0,0,0,.22)"></div>
<svg class="a" style="left:948px;top:566px" width="132" height="20" viewBox="948 566 132 20">
<text x="0" y="0" font-size="11.3" font-weight="bold" font-style="italic" fill="#f0791c" font-family="'Liberation Sans',sans-serif" stroke="#f0791c" stroke-width="0.55" transform="translate(952.4 580) scale(1.36 0.98)">S</text>
<rect x="967.2" y="571" width="0.7" height="9.5" fill="#d8d8d8"/>
<text x="972.3" y="579.4" font-size="9" font-weight="bold" fill="#222" font-family="'Liberation Sans','Noto Sans CJK SC',sans-serif">中</text>
<circle cx="988.9" cy="573.3" r="0.9" fill="none" stroke="#222" stroke-width="0.9"/>
<path d="M991.3 577.2 h1.7 v1.6 l-0.9 1.2 h-0.8 z" fill="#222"/>
<rect x="1003.2" y="571.6" width="4" height="6.2" rx="2" fill="#777" stroke="#333" stroke-width="0.7"/>
<path d="M1001.7 575.6 a3.5 3.5 0 0 0 7 0 M1005.2 579 v1.4" fill="none" stroke="#333" stroke-width="0.8"/>
<rect x="1017.4" y="572.3" width="8.2" height="7.2" rx="0.8" fill="none" stroke="#333" stroke-width="0.8"/>
<path d="M1021.5 573.8 v3 M1019.2 577.9 h4.6" stroke="#333" stroke-width="0.7"/>
<path d="M1035.3 572.3 l-2.4 1.6 l1 1.7 l1.2 -0.6 v4.6 h5 v-4.6 l1.2 0.6 l1 -1.7 l-2.4 -1.6 q-2.3 1.8 -4.6 0 z" fill="none" stroke="#333" stroke-width="0.8" stroke-linejoin="round"/>
<g fill="none" stroke="#333" stroke-width="0.95"><rect x="1049.4" y="572" width="3" height="3" rx="0.3"/><rect x="1049.4" y="577" width="3" height="3" rx="0.3"/><rect x="1054.6" y="577" width="3" height="3" rx="0.3"/><circle cx="1056.1" cy="573.5" r="1.6"/></g>
<circle cx="1069.5" cy="575.6" r="5.2" fill="#fdf6ee" stroke="#eee" stroke-width="0.4"/>
<path d="M1064.8 575 l7.6 -2.2 l0.9 1.9 l-7.2 2.8 z" fill="#e8641c"/>
<path d="M1066.6 577.2 l4 -1.2 l0.4 1.4 l-3 0.9 z" fill="#b23a10"/>
<circle cx="1073.6" cy="572.4" r="1" fill="#f7d43a"/>
</svg>
</div>
</body>
</html>
